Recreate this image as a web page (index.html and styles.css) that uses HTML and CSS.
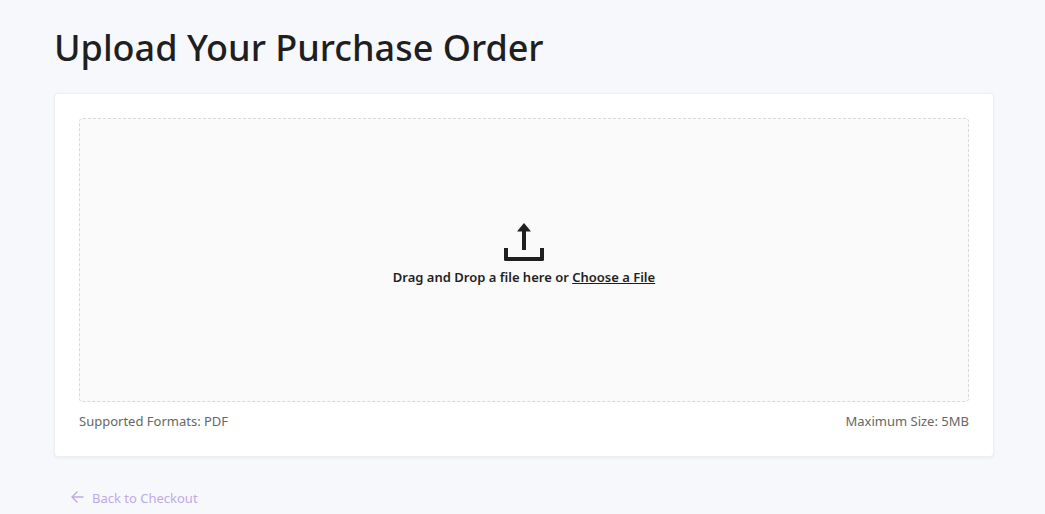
FILE: index.html
```html
<!DOCTYPE html>
<html lang="en">
<head>
<meta charset="utf-8">
<meta name="viewport" content="width=device-width, initial-scale=1">
<title>Upload Your Purchase Order</title>
<link rel="stylesheet" href="styles.css">
</head>
<body>
<main class="page">
  <h1 class="title">Upload Your Purchase Order</h1>
  <section class="card">
    <div class="dropzone">
      <svg class="upload-icon" viewBox="0 0 40 38" aria-hidden="true">
        <path d="M20 0 27 8.500H22V27H18V8.500H13ZM0 25H4V34H36V25H40V36.500Q40 38 38.500 38H1.500Q0 38 0 36.500Z"/>
      </svg>
      <p class="prompt">Drag and Drop a file here or <button class="choose" type="button">Choose a File</button></p>
    </div>
    <div class="hints">
      <span>Supported Formats: PDF</span>
      <span>Maximum Size: 5MB</span>
    </div>
  </section>
  <a class="back" href="#">
    <svg class="back-icon" viewBox="0 0 13 14" aria-hidden="true">
      <path d="M12.500 6H1M6.500 .5 1 6l5.500 5.500"/>
    </svg>
    <span>Back to Checkout</span>
  </a>
</main>
</body>
</html>
```
FILE: styles.css
```css
* {
  box-sizing: border-box;
}

body {
  margin: 0;
  background: #f7f8fc;
  color: #1f1f1f;
  font-family: "Segoe UI", "Noto Sans", "Open Sans", sans-serif;
  font-size: 13px;
  line-height: 20px;
}

.page {
  padding: 20px 51px 0 54px;
}

.title {
  margin: 0 0 17px;
  font-size: 36px;
  font-weight: 500;
  line-height: 56px;
}

.card {
  padding: 24px;
  background: #fff;
  border: 1px solid #eeeff2;
  border-radius: 4px;
  box-shadow: 0 1px 3px rgba(0, 0, 0, 0.06);
}

.dropzone {
  display: flex;
  flex-direction: column;
  align-items: center;
  justify-content: center;
  gap: 6px;
  min-height: 284px;
  padding: 24px 24px 34px;
  background: #fafafa;
  border: 1px dashed #d9d9d9;
  border-radius: 4px;
}

.upload-icon {
  width: 40px;
  height: 38px;
  fill: #1f1f1f;
}

.prompt {
  margin: 0;
  font-weight: 600;
}

.choose {
  padding: 0;
  border: 0;
  background: none;
  color: inherit;
  font: inherit;
  text-decoration: underline;
  cursor: pointer;
}

.hints {
  display: flex;
  justify-content: space-between;
  gap: 16px;
  padding: 9px 0 1px;
  color: #666;
}

.back {
  display: inline-flex;
  align-items: center;
  gap: 8px;
  margin: 31px 0 0 17px;
  color: #c1a9e6;
  text-decoration: none;
}

.back-icon {
  width: 13px;
  height: 14px;
  fill: none;
  stroke: currentColor;
  stroke-width: 1.4;
}
```
